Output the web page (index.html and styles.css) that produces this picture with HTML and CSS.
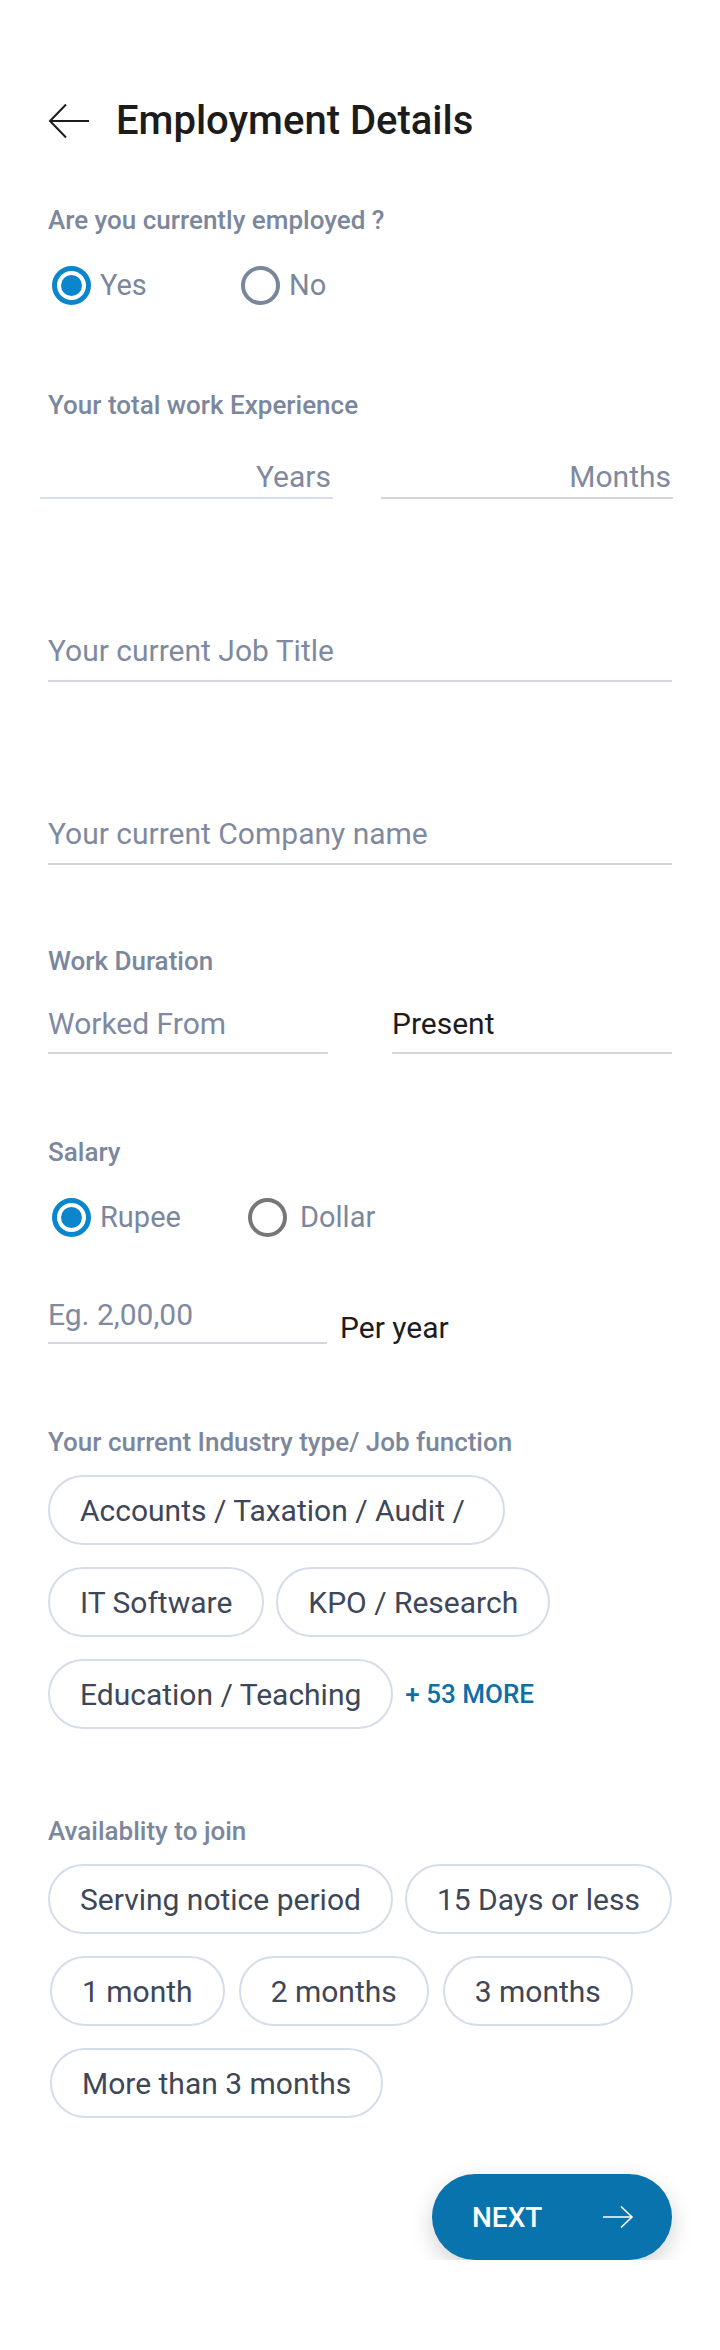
FILE: index.html
```html
<!DOCTYPE html>
<html lang="en">
<head>
    <meta charset="UTF-8">
    <meta name="viewport" content="width=device-width, initial-scale=1.0">
    <title>Employment Details</title>
    <link rel="stylesheet" href="styles.css">
</head>
<body>
    <div class="page">
        <div class="header">
            <svg class="back-icon" width="42" height="36" viewBox="0 0 42 36">
                <path d="M41 18H2M18 1.5L2 18l16 16.5" fill="none" stroke="#1c1c1c" stroke-width="2"/>
            </svg>
            <h1>Employment Details</h1>
        </div>

        <div class="label employed-label">Are you currently employed ?</div>
        <div class="radio-row">
            <div class="radio-option">
                <span class="radio checked"></span>
                <span class="radio-text">Yes</span>
            </div>
            <div class="radio-option">
                <span class="radio"></span>
                <span class="radio-text">No</span>
            </div>
        </div>

        <div class="label experience-label">Your total work Experience</div>
        <div class="experience-row">
            <div class="field align-right">Years</div>
            <div class="field align-right">Months</div>
        </div>

        <div class="field wide job-field">Your current Job Title</div>
        <div class="field wide company-field">Your current Company name</div>

        <div class="label duration-label">Work Duration</div>
        <div class="duration-row">
            <div class="field">Worked From</div>
            <div class="field filled">Present</div>
        </div>

        <div class="label salary-label">Salary</div>
        <div class="radio-row">
            <div class="radio-option wide-option">
                <span class="radio checked"></span>
                <span class="radio-text">Rupee</span>
            </div>
            <div class="radio-option">
                <span class="radio grey"></span>
                <span class="radio-text">Dollar</span>
            </div>
        </div>
        <div class="salary-row">
            <div class="field salary-field">Eg. 2,00,00</div>
            <span class="per-year">Per year</span>
        </div>

        <div class="label industry-label">Your current Industry type/ Job function</div>
        <div class="chips industry-chips">
            <span class="chip long-chip">Accounts / Taxation / Audit /</span>
            <span class="chip">IT Software</span>
            <span class="chip">KPO / Research</span>
            <span class="chip">Education / Teaching</span>
            <a href="#" class="more-link">+ 53 MORE</a>
        </div>

        <div class="label join-label">Availablity to join</div>
        <div class="chips join-chips">
            <span class="chip">Serving notice period</span>
            <span class="chip">15 Days or less</span>
            <span class="chip">1 month</span>
            <span class="chip">2 months</span>
            <span class="chip">3 months</span>
            <span class="chip">More than 3 months</span>
        </div>

        <div class="footer">
            <button class="next-btn">
                <span>NEXT</span>
                <svg width="32" height="24" viewBox="0 0 32 24">
                    <path d="M1 12h29M19 1.5L30 12 19 22.5" fill="none" stroke="#fff" stroke-width="1.6"/>
                </svg>
            </button>
        </div>
    </div>
</body>
</html>
```

FILE: styles.css
```css
body {
    margin: 0;
    background-color: #fff;
    font-family: Roboto, "Liberation Sans", Arial, sans-serif;
}

.page {
    width: 720px;
    padding: 0 48px;
    box-sizing: border-box;
}

.header {
    display: flex;
    align-items: center;
    padding-top: 99px;
    height: 44px;
    box-sizing: content-box;
}

.back-icon {
    flex-shrink: 0;
    margin-right: 26px;
}

.header h1 {
    margin: 0;
    font-size: 40px;
    line-height: 44px;
    font-weight: 500;
    color: #1c1c1c;
}

.label {
    font-size: 26px;
    line-height: 30px;
    font-weight: 500;
    color: #7b879c;
}

.employed-label {
    margin-top: 62px;
}

.radio-row {
    display: flex;
    align-items: center;
    height: 40px;
    margin-top: 30px;
    padding-left: 4px;
}

.radio-option {
    display: flex;
    align-items: center;
    width: 189px;
}

.radio-option.wide-option {
    width: 196px;
}

.radio {
    width: 39px;
    height: 39px;
    box-sizing: border-box;
    border: 4px solid #7a869b;
    border-radius: 50%;
    margin-right: 9px;
    position: relative;
}

.radio.grey {
    border-color: #777;
    margin-right: 13px;
}

.radio.checked {
    border: 5px solid #0b86cd;
}

.radio.checked::after {
    content: "";
    position: absolute;
    left: 4px;
    top: 4px;
    width: 21px;
    height: 21px;
    border-radius: 50%;
    background-color: #0b86cd;
}

.radio-text {
    font-size: 29px;
    color: #7b879c;
}

.experience-label {
    margin-top: 85px;
}

.field {
    font-size: 30px;
    line-height: 40px;
    color: #7f8aa0;
    border-bottom: 2px solid #d2d6de;
}

.field.filled {
    color: #1c1c1c;
}

.field.align-right {
    text-align: right;
    padding-right: 2px;
}

.experience-row {
    display: grid;
    grid-template-columns: 293px 292px;
    column-gap: 48px;
    margin-top: 37px;
    margin-left: -8px;
}

.experience-row .field:first-child {
    border-bottom-color: #d6ddeb;
}

.field.wide {
    padding-bottom: 9px;
}

.job-field {
    margin-top: 132px;
}

.company-field {
    margin-top: 132px;
}

.duration-label {
    margin-top: 81px;
}

.duration-row {
    display: flex;
    justify-content: space-between;
    margin-top: 28px;
}

.duration-row .field {
    width: 280px;
    padding-bottom: 8px;
}

.salary-label {
    margin-top: 83px;
}

.salary-row {
    display: flex;
    align-items: flex-end;
    margin-top: 58px;
}

.salary-field {
    width: 279px;
    padding-bottom: 7px;
}

.per-year {
    font-size: 30px;
    line-height: 40px;
    color: #1c1c1c;
    margin-left: 13px;
    margin-bottom: -4px;
}

.industry-label {
    margin-top: 83px;
}

.chips {
    display: flex;
    flex-wrap: wrap;
    align-items: center;
    gap: 22px 12px;
}

.industry-chips {
    margin-top: 18px;
    width: 570px;
}

.chip {
    display: inline-flex;
    align-items: center;
    height: 70px;
    box-sizing: border-box;
    padding: 0 30px;
    border: 2px solid #d5dcea;
    border-radius: 35px;
    font-size: 30px;
    color: #3e4758;
    white-space: nowrap;
}

.chip.long-chip {
    padding-right: 38px;
}

.more-link {
    font-size: 26px;
    font-weight: 500;
    color: #0b6fa8;
    text-decoration: none;
}

.join-label {
    margin-top: 87px;
}

.join-chips {
    margin-top: 18px;
    width: 640px;
}

.join-chips .chip:nth-child(n+3) {
    margin-left: 2px;
}

.footer {
    display: flex;
    justify-content: flex-end;
    margin-top: 56px;
}

.next-btn {
    display: flex;
    align-items: center;
    justify-content: space-between;
    width: 240px;
    height: 86px;
    padding: 0 38px 0 40px;
    border: none;
    border-radius: 43px;
    background-color: #0873ad;
    color: #fff;
    font-family: Roboto, "Liberation Sans", Arial, sans-serif;
    font-size: 28px;
    font-weight: 500;
    box-shadow: 0 8px 22px rgba(0, 0, 0, 0.18);
    cursor: pointer;
}
```
